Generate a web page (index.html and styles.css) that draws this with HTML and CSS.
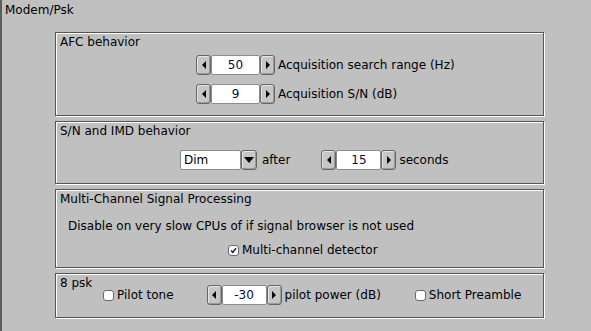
FILE: index.html
```html
<!DOCTYPE html>
<html lang="en">
<head>
    <meta charset="UTF-8">
    <title>Modem/Psk</title>
    <link rel="stylesheet" href="styles.css">
</head>
<body>
    <div class="panel">
        <div class="panel-title">Modem/Psk</div>

        <!-- AFC -->
        <div class="group group-afc">
            <div class="group-title">AFC behavior</div>
            <div class="row afc-row">
                <div class="spinner wide">
                    <button class="spin-btn"><span class="arrow-left"></span></button>
                    <input class="spin-value" type="text" value="50">
                    <button class="spin-btn"><span class="arrow-right"></span></button>
                </div>
                <span class="row-label">Acquisition search range (Hz)</span>
            </div>
            <div class="row afc-row second">
                <div class="spinner wide">
                    <button class="spin-btn"><span class="arrow-left"></span></button>
                    <input class="spin-value" type="text" value="9">
                    <button class="spin-btn"><span class="arrow-right"></span></button>
                </div>
                <span class="row-label">Acquisition S/N (dB)</span>
            </div>
        </div>

        <!-- S/N and IMD -->
        <div class="group group-imd">
            <div class="group-title">S/N and IMD behavior</div>
            <div class="row imd-row">
                <div class="choice">
                    <div class="choice-value">Dim</div>
                    <button class="choice-btn"><span class="arrow-down"></span></button>
                </div>
                <span class="choice-label">after</span>
                <div class="spinner imd-spinner">
                    <button class="spin-btn"><span class="arrow-left"></span></button>
                    <input class="spin-value" type="text" value="15">
                    <button class="spin-btn"><span class="arrow-right"></span></button>
                </div>
                <span class="row-label">seconds</span>
            </div>
        </div>

        <!-- Multi-channel -->
        <div class="group group-multi">
            <div class="group-title">Multi-Channel Signal Processing</div>
            <div class="note">Disable on very slow CPUs of if signal browser is not used</div>
            <label class="row check-row multi-row">
                <span class="checkbox checked">
                    <svg width="11" height="11" viewBox="0 0 11 11"><path d="M2.6 5.4 L4.6 7.8 L8.6 2.8" fill="none" stroke="#14146a" stroke-width="1.8"/></svg>
                </span>
                <span class="check-label">Multi-channel detector</span>
            </label>
        </div>

        <!-- 8 psk -->
        <div class="group group-8psk">
            <div class="group-title">8 psk</div>
            <div class="row psk-row">
                <label class="check-row">
                    <span class="checkbox"></span>
                    <span class="check-label">Pilot tone</span>
                </label>
                <div class="spinner psk-spinner">
                    <button class="spin-btn"><span class="arrow-left"></span></button>
                    <input class="spin-value" type="text" value="-30">
                    <button class="spin-btn"><span class="arrow-right"></span></button>
                </div>
                <span class="row-label">pilot power (dB)</span>
                <label class="check-row preamble">
                    <span class="checkbox"></span>
                    <span class="check-label">Short Preamble</span>
                </label>
            </div>
        </div>
    </div>
</body>
</html>
```

FILE: styles.css
```css
/* Base */
body {
    margin: 0;
    background-color: #c0c0c0;
    color: #000000;
    font-family: "DejaVu Sans", sans-serif;
    font-size: 12px;
    line-height: 14px;
    overflow: hidden;
}

.panel {
    height: 331px;
    box-sizing: border-box;
    padding-top: 3px;
    border-left: 2px solid #5e5e5e;
}

.panel-title {
    padding-left: 3px;
}

/* Engraved group frames */
.group {
    box-sizing: border-box;
    width: 489px;
    margin-left: 53px;
    margin-bottom: 5px;
    padding: 2px 0 0 0;
    border: 1px solid #555555;
    box-shadow: inset 1px 1px 0 #ffffff, 1px 1px 0 #ffffff;
}

.group-title {
    padding-left: 4px;
}

.group-afc {
    margin-top: 15px;
    padding-bottom: 11px;
}

.group-imd {
    padding-bottom: 13px;
}

.group-multi {
    padding-bottom: 10px;
}

.group-8psk {
    padding-bottom: 12px;
}

/* Rows */
.row {
    display: flex;
    align-items: center;
}

.afc-row {
    margin-top: 6px;
    padding-left: 140px;
}

.afc-row.second {
    margin-top: 9px;
}

.row-label {
    margin-left: 3px;
}

.imd-row {
    margin-top: 12px;
    padding-left: 124px;
}

.note {
    margin-top: 13px;
    padding-left: 12px;
}

.multi-row {
    margin-top: 10px;
    padding-left: 172px;
}

.psk-row {
    margin-top: -5px;
    padding-left: 47px;
}

/* Spinner */
.spinner {
    display: flex;
    height: 20px;
}

.spin-btn {
    box-sizing: border-box;
    width: 15px;
    height: 20px;
    margin: 0;
    padding: 0;
    background-color: #c6c6c6;
    border: 1px solid #666666;
    border-radius: 3px;
    box-shadow: inset 1px 1px 0 #e6e6e6, inset -1px -1px 0 #9a9a9a;
    display: flex;
    align-items: center;
    justify-content: center;
}

.spin-value {
    box-sizing: border-box;
    width: 45px;
    height: 20px;
    margin: 0;
    padding: 0;
    border: 1px solid #8c8c8c;
    border-radius: 2px;
    background-color: #ffffff;
    font-family: "DejaVu Sans", sans-serif;
    font-size: 12px;
    color: #0a0a30;
    text-align: center;
    outline: none;
}

.spinner.wide .spin-value {
    width: 49px;
}

.arrow-left {
    width: 0;
    height: 0;
    border-top: 4px solid transparent;
    border-bottom: 4px solid transparent;
    border-right: 4px solid #000000;
}

.arrow-right {
    width: 0;
    height: 0;
    border-top: 4px solid transparent;
    border-bottom: 4px solid transparent;
    border-left: 4px solid #000000;
}

.imd-spinner {
    margin-left: 31px;
}

.psk-spinner {
    margin-left: 33px;
}

/* Choice */
.choice {
    display: flex;
    height: 20px;
}

.choice-value {
    box-sizing: border-box;
    width: 61px;
    height: 20px;
    padding: 2px 0 0 3px;
    border: 1px solid #8c8c8c;
    border-radius: 2px;
    background-color: #ffffff;
}

.choice-btn {
    box-sizing: border-box;
    width: 16px;
    height: 20px;
    margin: 0;
    padding: 0;
    background-color: #c6c6c6;
    border: 1px solid #666666;
    border-radius: 3px;
    box-shadow: inset 1px 1px 0 #e6e6e6, inset -1px -1px 0 #9a9a9a;
    display: flex;
    align-items: center;
    justify-content: center;
}

.arrow-down {
    width: 0;
    height: 0;
    border-left: 5px solid transparent;
    border-right: 5px solid transparent;
    border-top: 6px solid #000000;
}

.choice-label {
    margin-left: 5px;
}

/* Checkboxes */
.check-row {
    display: flex;
    align-items: center;
}

.checkbox {
    box-sizing: border-box;
    width: 11px;
    height: 11px;
    border: 1px solid #6a6a6a;
    border-radius: 3px;
    background-color: #ffffff;
    display: flex;
    align-items: center;
    justify-content: center;
}

.checkbox svg {
    display: block;
}

.check-label {
    margin-left: 3px;
}

.preamble {
    margin-left: 34px;
}
```
